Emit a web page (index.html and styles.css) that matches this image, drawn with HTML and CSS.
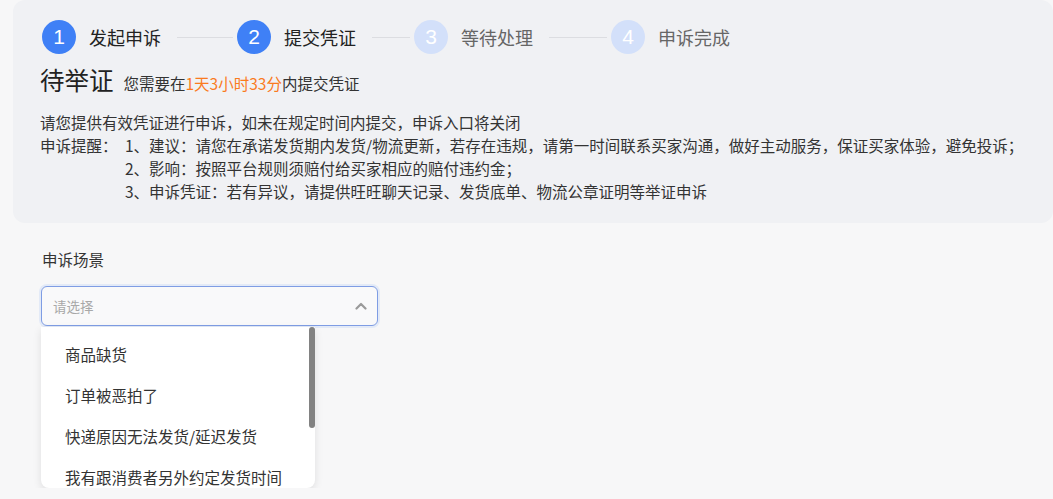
FILE: index.html
```html
<!DOCTYPE html>
<html lang="zh-CN">
<head>
    <meta charset="UTF-8">
    <meta name="viewport" content="width=device-width, initial-scale=1.0">
    <title>申诉举证</title>
    <link rel="stylesheet" href="styles.css">
</head>
<body>
    <div class="panel">
        <div class="steps">
            <div class="step active">
                <span class="step-num">1</span>
                <span class="step-label">发起申诉</span>
            </div>
            <div class="step-line line-1"></div>
            <div class="step active">
                <span class="step-num">2</span>
                <span class="step-label">提交凭证</span>
            </div>
            <div class="step-line line-2"></div>
            <div class="step">
                <span class="step-num">3</span>
                <span class="step-label">等待处理</span>
            </div>
            <div class="step-line line-3"></div>
            <div class="step">
                <span class="step-num">4</span>
                <span class="step-label">申诉完成</span>
            </div>
        </div>

        <div class="status">
            <span class="status-title">待举证</span>
            <span class="status-sub">您需要在<em>1天3小时33分</em>内提交凭证</span>
        </div>

        <p class="desc">请您提供有效凭证进行申诉，如未在规定时间内提交，申诉入口将关闭</p>
        <div class="tips">
            <span class="tips-label">申诉提醒：</span>
            <ul class="tips-list">
                <li>1、建议：请您在承诺发货期内发货/物流更新，若存在违规，请第一时间联系买家沟通，做好主动服务，保证买家体验，避免投诉；</li>
                <li>2、影响：按照平台规则须赔付给买家相应的赔付违约金；</li>
                <li>3、申诉凭证：若有异议，请提供旺旺聊天记录、发货底单、物流公章证明等举证申诉</li>
            </ul>
        </div>
    </div>

    <div class="form">
        <div class="field-label">申诉场景</div>
        <div class="select">
            <span class="placeholder">请选择</span>
            <svg class="arrow" width="12" height="8" viewBox="0 0 12 8">
                <path d="M1.5 6.5 L6 2 L10.5 6.5" fill="none" stroke="#9a9a9a" stroke-width="2.2" stroke-linecap="round" stroke-linejoin="round"/>
            </svg>
        </div>
        <div class="dropdown">
            <div class="options">
                <div class="option">商品缺货</div>
                <div class="option">订单被恶拍了</div>
                <div class="option">快递原因无法发货/延迟发货</div>
                <div class="option">我有跟消费者另外约定发货时间</div>
            </div>
            <div class="scroll-thumb"></div>
        </div>
    </div>
</body>
</html>
```

FILE: styles.css
```css
body {
    margin: 0;
    padding: 0;
    background-color: #f7f7f8;
    font-family: "Noto Sans CJK SC", "Noto Sans", sans-serif;
    color: #333;
    font-size: 15.5px;
}

.panel {
    margin-left: 13px;
    padding: 20px 27px 20px;
    background-color: #f0f1f4;
    border-radius: 12px;
}

/* steps */
.steps {
    display: flex;
    align-items: center;
    height: 34px;
    margin-left: 2px;
}

.step {
    display: flex;
    align-items: center;
}

.step-num {
    width: 34px;
    height: 34px;
    border-radius: 50%;
    background-color: #d3e0fa;
    color: #fff;
    font-family: "Liberation Sans", Arial, sans-serif;
    font-size: 21px;
    display: flex;
    justify-content: center;
    align-items: center;
    margin-right: 13px;
}

.step-label {
    font-size: 18px;
    color: #666;
}

.step.active .step-num {
    background-color: #3f80f6;
}

.step.active .step-label {
    color: #222;
}

.step-line {
    height: 1px;
    background-color: #dcdde1;
    margin: 0 4px 0 16px;
}

.line-1 { width: 56px; }
.line-2 { width: 38px; }
.line-3 { width: 58px; }

/* status */
.status {
    display: flex;
    align-items: baseline;
    margin-top: 10px;
    line-height: 32px;
}

.status-title {
    font-size: 24.5px;
    color: #222;
}

.status-sub {
    margin-left: 10px;
    font-size: 15.5px;
    color: #333;
}

.status-sub em {
    font-style: normal;
    color: #fa7b1e;
}

.desc {
    margin: 12px 0 0;
    line-height: 23px;
}

.tips {
    display: flex;
    line-height: 23px;
    white-space: nowrap;
}

.tips-label {
    width: 85px;
    flex-shrink: 0;
}

.tips-list {
    list-style: none;
    margin: 0;
    padding: 0;
}

/* form */
.form {
    padding: 25px 0 0 41px;
}

.field-label {
    line-height: 22px;
    color: #333;
    margin-left: 1px;
}

.select {
    width: 337px;
    height: 40px;
    margin-top: 16px;
    box-sizing: border-box;
    border: 1px solid #7f9de4;
    border-radius: 6px;
    box-shadow: 0 0 0 2px rgba(63, 128, 246, 0.1);
    background-color: #f9f9fa;
    display: flex;
    align-items: center;
    justify-content: space-between;
    padding: 0 10px 0 11px;
}

.placeholder {
    font-size: 13.5px;
    color: #a8a8a8;
}

.dropdown {
    display: flex;
    width: 274px;
    height: 161px;
    margin-top: 1px;
    background-color: #fff;
    border-radius: 0 0 8px 8px;
    box-shadow: 0 3px 8px rgba(0, 0, 0, 0.1);
    overflow: hidden;
}

.options {
    flex: 1;
    padding-top: 7px;
}

.option {
    height: 41px;
    line-height: 41px;
    padding-left: 24px;
    color: #333;
    white-space: nowrap;
}

.scroll-thumb {
    width: 6px;
    height: 101px;
    background-color: #828282;
    border-radius: 3px;
}
```
